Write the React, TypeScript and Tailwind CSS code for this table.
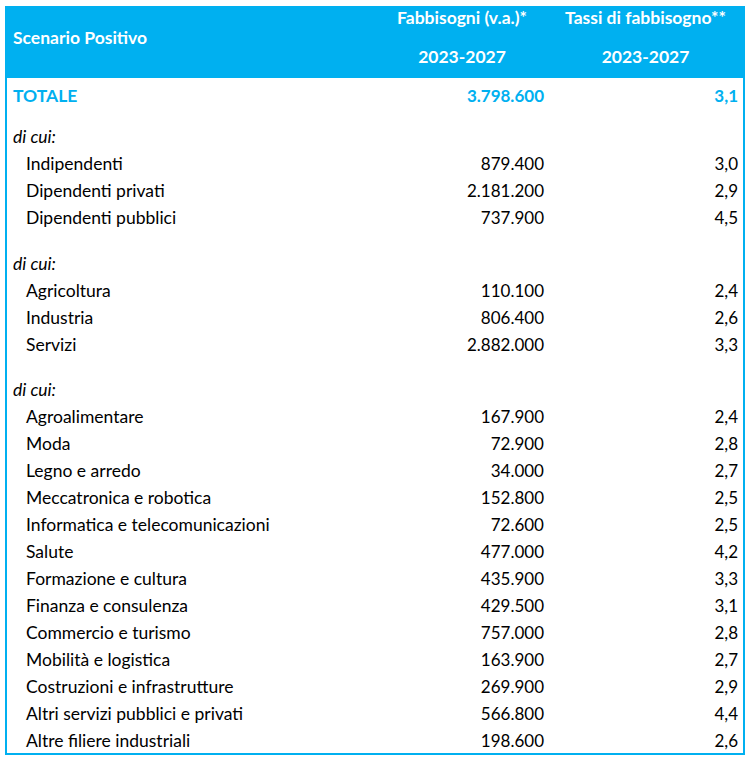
import React from 'react';

type Row =
    | { kind: 'total'; label: string; abs: string; rate: string }
    | { kind: 'group'; label: string }
    | { kind: 'item'; label: string; abs: string; rate: string }
    | { kind: 'gap'; h: string };

const rows: Row[] = [
    { kind: 'total', label: 'TOTALE', abs: '3.798.600', rate: '3,1' },
    { kind: 'gap', h: 'h-[14px]' },
    { kind: 'group', label: 'di cui:' },
    { kind: 'item', label: 'Indipendenti', abs: '879.400', rate: '3,0' },
    { kind: 'item', label: 'Dipendenti privati', abs: '2.181.200', rate: '2,9' },
    { kind: 'item', label: 'Dipendenti pubblici', abs: '737.900', rate: '4,5' },
    { kind: 'gap', h: 'h-[19px]' },
    { kind: 'group', label: 'di cui:' },
    { kind: 'item', label: 'Agricoltura', abs: '110.100', rate: '2,4' },
    { kind: 'item', label: 'Industria', abs: '806.400', rate: '2,6' },
    { kind: 'item', label: 'Servizi', abs: '2.882.000', rate: '3,3' },
    { kind: 'gap', h: 'h-[18px]' },
    { kind: 'group', label: 'di cui:' },
    { kind: 'item', label: 'Agroalimentare', abs: '167.900', rate: '2,4' },
    { kind: 'item', label: 'Moda', abs: '72.900', rate: '2,8' },
    { kind: 'item', label: 'Legno e arredo', abs: '34.000', rate: '2,7' },
    { kind: 'item', label: 'Meccatronica e robotica', abs: '152.800', rate: '2,5' },
    { kind: 'item', label: 'Informatica e telecomunicazioni', abs: '72.600', rate: '2,5' },
    { kind: 'item', label: 'Salute', abs: '477.000', rate: '4,2' },
    { kind: 'item', label: 'Formazione e cultura', abs: '435.900', rate: '3,3' },
    { kind: 'item', label: 'Finanza e consulenza', abs: '429.500', rate: '3,1' },
    { kind: 'item', label: 'Commercio e turismo', abs: '757.000', rate: '2,8' },
    { kind: 'item', label: 'Mobilità e logistica', abs: '163.900', rate: '2,7' },
    { kind: 'item', label: 'Costruzioni e infrastrutture', abs: '269.900', rate: '2,9' },
    { kind: 'item', label: 'Altri servizi pubblici e privati', abs: '566.800', rate: '4,4' },
    { kind: 'item', label: 'Altre filiere industriali', abs: '198.600', rate: '2,6' },
];

const grid = 'grid grid-cols-[369px_172px_195px]';

export default function App() {
    return (
        <div className="w-[750px] h-[758px] bg-white pt-[6px] pl-[5px] font-['Lato',sans-serif] text-[17.5px] text-black">
            <div className="w-[740px] border-2 border-[#00B0F0]">

                {/* Header */}
                <div className={`${grid} h-[70px] bg-[#00B0F0] text-white font-bold`}>
                    <div className="pl-[6px] pt-[20px] leading-[20px]">Scenario Positivo</div>
                    <div className="flex flex-col items-center">
                        <span className="leading-[20px]">Fabbisogni (v.a.)*</span>
                        <span className="mt-[19px] leading-[20px]">2023-2027</span>
                    </div>
                    <div className="flex flex-col items-center">
                        <span className="leading-[20px]">Tassi di fabbisogno**</span>
                        <span className="mt-[19px] leading-[20px]">2023-2027</span>
                    </div>
                </div>

                {/* Body */}
                <div className="pt-[3px]">
                    {rows.map((r, i) => {
                        if (r.kind === 'gap') return <div key={i} className={r.h} />;
                        if (r.kind === 'group')
                            return (
                                <div key={i} className={`${grid} h-[27px] pt-[2px] items-center`}>
                                    <span className="pl-[6px] italic">{r.label}</span>
                                </div>
                            );
                        const total = r.kind === 'total';
                        return (
                            <div
                                key={i}
                                className={`${grid} h-[27px] pt-[2px] items-center ${total ? 'font-bold text-[#00B0F0]' : ''}`}
                            >
                                <span className={total ? 'pl-[6px]' : 'pl-[19px]'}>{r.label}</span>
                                <span className="text-right pr-[4px] text-[17px]">{r.abs}</span>
                                <span className="text-right pr-[5px] text-[17px]">{r.rate}</span>
                            </div>
                        );
                    })}
                </div>
            </div>
        </div>
    );
}
